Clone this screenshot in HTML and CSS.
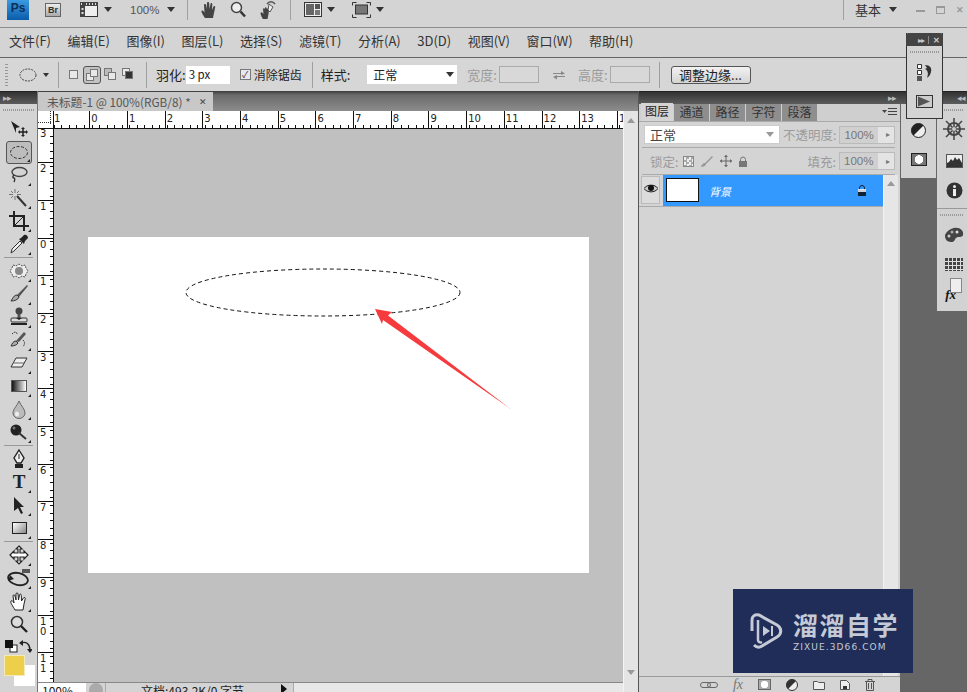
FILE: index.html
```html
<!DOCTYPE html>
<html lang="zh-CN">

<head>
    <meta charset="UTF-8">
    <title>Photoshop CS4</title>
    <link rel="stylesheet" href="styles.css">
</head>

<body>
    <div class="app">

        <!-- Application bar -->
        <header class="appbar">
            <div class="ps-logo">Ps</div>
            <div class="br-logo">Br</div>
            <svg class="icon film" width="18" height="15" viewBox="0 0 18 15"><rect x="0.5" y="0.5" width="17" height="14" fill="#eee" stroke="#333"/><rect x="0" y="0" width="18" height="4" fill="#444"/><rect x="0" y="0" width="5" height="15" fill="#444"/><path d="M1 1h1v2H1zM6 1h1v2H6zM9 1h1v2H9zM12 1h1v2h-1zM15 1h1v2h-1zM1.500 6h2v2h-2zM1.500 10h2v2h-2z" fill="#ddd"/></svg>
            <span class="caret film-caret"></span>
            <span class="zoom-value">100%</span>
            <span class="caret zoom-caret"></span>
            <span class="vsep sep-a"></span>
            <svg class="icon hand-top" width="18" height="18" viewBox="0 0 18 18"><path d="M5 17C3 14 1 11 1.500 10c1-1 2 0 3 1.500L4 4c0-1.500 2-1.500 2 0l.5 4L7 2c0-1.500 2-1.500 2.200 0L9.500 8l1-5c.3-1.500 2-1 1.800.5L12 9l1.500-3.500c.6-1.200 2-.5 1.700.8L14 12l-1 5z" fill="#444"/></svg>
            <svg class="icon zoom-top" width="16" height="17" viewBox="0 0 16 17"><circle cx="6.500" cy="6.500" r="5" fill="#eee" stroke="#444" stroke-width="1.500"/><path d="M10.500 10.500L15 15.500" stroke="#333" stroke-width="2.500"/></svg>
            <svg class="icon rotate-top" width="18" height="20" viewBox="0 0 18 20"><path d="M4 19C2 16 1 13 2 12.500c1-.5 1.500.5 2.500 1.500L4 9c0-1 1.500-1 1.500 0L6 8c0-1 1.500-1 1.600 0l.4 1 .6-.5c.8-.8 1.700 0 1.400 1L9.500 14l-1 5z" fill="#444"/><path d="M10 4l4 3-3 5-2-2z" fill="#eee" stroke="#555"/><path d="M8 4c2-3 6-3 8 0" fill="none" stroke="#555" stroke-width="1.500"/></svg>
            <span class="vsep sep-b"></span>
            <svg class="icon arrange" width="18" height="15" viewBox="0 0 18 15"><rect x="0.500" y="0.500" width="17" height="14" fill="#eee" stroke="#333"/><rect x="2" y="2" width="8" height="11" fill="#666"/><rect x="11" y="2" width="5" height="5" fill="#555"/><rect x="11" y="8" width="5" height="5" fill="#777"/></svg>
            <span class="caret arrange-caret"></span>
            <svg class="icon screen" width="19" height="16" viewBox="0 0 19 16"><rect x="3.500" y="3" width="12" height="9" fill="#777" stroke="#333"/><path d="M0.500 3.500V.5h4M14.500.5h4v3M18.500 12.500v3h-4M4.500 15.500h-4v-3" fill="none" stroke="#333"/></svg>
            <span class="caret screen-caret"></span>
            <span class="vsep sep-c"></span>
            <span class="workspace-name">基本</span>
            <span class="caret workspace-caret"></span>
            <div class="window-buttons">
                <span class="win-min"></span>
                <span class="win-max"></span>
                <span class="win-close">✕</span>
            </div>
        </header>

        <!-- Menus -->
        <nav class="menubar">
            <span>文件(F)</span>
            <span>编辑(E)</span>
            <span>图像(I)</span>
            <span>图层(L)</span>
            <span>选择(S)</span>
            <span>滤镜(T)</span>
            <span>分析(A)</span>
            <span>3D(D)</span>
            <span>视图(V)</span>
            <span>窗口(W)</span>
            <span>帮助(H)</span>
        </nav>

        <!-- Tool options -->
        <div class="optbar">
            <span class="grip-v"></span>
            <svg class="opt-ellipse" width="18" height="14" viewBox="0 0 18 14"><ellipse cx="9" cy="7" rx="8" ry="6" fill="none" stroke="#444" stroke-dasharray="2 1"/></svg>
            <span class="caret opt-caret"></span>
            <span class="vsep opt-sep-a"></span>
            <div class="modes">
                <span class="mode"><i class="sq sq-one"></i></span>
                <span class="mode pressed"><i class="sq sq-two"></i><i class="sq sq-three"></i></span>
                <span class="mode"><i class="sq sq-four"></i><i class="sq sq-five"></i></span>
                <span class="mode"><i class="sq sq-six"></i><i class="sq sq-seven"></i></span>
            </div>
            <span class="vsep opt-sep-b"></span>
            <label class="feather-label">羽化:</label>
            <span class="feather-input">3 px</span>
            <span class="checkbox">✓</span>
            <span class="aa-label">消除锯齿</span>
            <span class="vsep opt-sep-c"></span>
            <label class="style-label">样式:</label>
            <span class="style-select">正常<span class="caret"></span></span>
            <label class="dim-label width-label">宽度:</label>
            <span class="dim-input"></span>
            <svg class="swap" width="12" height="10" viewBox="0 0 12 10"><path d="M0 3h8V1l4 2.500L8 5V4H0zM12 6H4V5L0 7l4 2.500V7h8z" fill="#888"/></svg>
            <label class="dim-label height-label">高度:</label>
            <span class="dim-input"></span>
            <span class="vsep opt-sep-d"></span>
            <span class="refine">调整边缘...</span>
        </div>

        <div class="workspace">

            <!-- Tools -->
            <aside class="toolbox">
                <div class="dark-head"><span class="arrows">▸▸</span></div>
                <div class="grip-h"></div>
                <div class="tool"><svg width="20" height="18" viewBox="0 0 20 18"><path d="M2 1l9 6-4 1 0 5z" fill="#222"/><path d="M14 8v8M10 12h8" stroke="#222" stroke-width="1.500"/><path d="M14 7l-2 2h4zM14 17l-2-2h4zM9 12l2-2v4zM19 12l-2-2v4z" fill="#222"/></svg></div>
                <div class="tool selected more"><svg width="20" height="15" viewBox="0 0 20 15"><ellipse cx="10" cy="7.500" rx="8.500" ry="6" fill="none" stroke="#333" stroke-dasharray="3 1.500"/></svg></div>
                <div class="tool more"><svg width="20" height="18" viewBox="0 0 20 18"><ellipse cx="10.500" cy="6" rx="7.500" ry="4.500" fill="none" stroke="#444" stroke-width="1.400"/><path d="M5 9c-2 2-1 3 0 3s1 2 0 4" fill="none" stroke="#333" stroke-width="1.400"/></svg></div>
                <div class="tool more"><svg width="20" height="18" viewBox="0 0 20 18"><path d="M8 7l9 10" stroke="#333" stroke-width="2"/><path d="M6 0v4M6 7v4M0 5.500h4M8 5.500h4M2 2l2 2M10 2L8 4M2 9l2-2" stroke="#777"/></svg></div>
                <div class="tool more"><svg width="20" height="20" viewBox="0 0 20 20"><path d="M5 0v15h15M0 5h15v15" fill="none" stroke="#222" stroke-width="2"/><path d="M5 15L15 5" stroke="#222"/></svg></div>
                <div class="tool more"><svg width="20" height="20" viewBox="0 0 20 20"><path d="M2 19l1-4 8-8 2 2-8 8z" fill="#eee" stroke="#333"/><path d="M10 5l5 5 1-3 3-3c0-2-2-4-4-3l-3 3z" fill="#222"/></svg></div>
                <div class="tool-sep"></div>
                <div class="tool more"><svg width="20" height="18" viewBox="0 0 20 18"><path d="M4 3l3 1 3-2 3 2 3-1 1 3 2 3-2 3-1 3-3-1-3 2-3-2-3 1-1-3-2-3 2-3z" fill="#eee" stroke="#555" stroke-dasharray="2 1"/><circle cx="10" cy="9" r="4" fill="#888"/></svg></div>
                <div class="tool more"><svg width="20" height="20" viewBox="0 0 20 20"><path d="M8 11L18 1l1 1L10 13z" fill="#555"/><path d="M8 11c-3 0-4 3-6 6 3 0 7-1 8-4z" fill="#aaa" stroke="#333"/></svg></div>
                <div class="tool more"><svg width="20" height="21" viewBox="0 0 20 21"><circle cx="10" cy="4" r="3.500" fill="#444"/><path d="M8.500 7h3v4h-3z" fill="#555"/><rect x="2" y="11" width="16" height="4" rx="1" fill="#ddd" stroke="#333"/><rect x="2" y="16" width="16" height="2" fill="#222"/><path d="M10 13l-3-2h6z" fill="#222"/></svg></div>
                <div class="tool more"><svg width="20" height="20" viewBox="0 0 20 20"><path d="M7 11L15 2l2 2-7 8z" fill="#555"/><path d="M7 11c-3 0-4 3-5 5 3 0 6-1 7-3z" fill="#aaa" stroke="#333"/><path d="M3 4c3-3 5-2 5 0M14 10c2 2 2 4 0 7" fill="none" stroke="#333" stroke-dasharray="1.500 1"/></svg></div>
                <div class="tool more"><svg width="20" height="17" viewBox="0 0 20 17"><path d="M7 3h11l-5 9H2z" fill="#eee" stroke="#333"/><path d="M4 8h11" stroke="#666"/></svg></div>
                <div class="tool more"><span class="gradient-swatch"></span></div>
                <div class="tool more"><svg width="16" height="19" viewBox="0 0 16 19"><path d="M8 1C6 6 2 9 2 13a6 5.500 0 0 0 12 0C14 9 10 6 8 1z" fill="#bbb" stroke="#666"/><ellipse cx="6" cy="14" rx="2" ry="2.500" fill="#eee"/></svg></div>
                <div class="tool more"><svg width="20" height="19" viewBox="0 0 20 19"><circle cx="7" cy="7" r="5.500" fill="#222"/><path d="M10 10l7 6" stroke="#333" stroke-width="2"/><circle cx="5" cy="5" r="1.500" fill="#777"/></svg></div>
                <div class="tool-sep"></div>
                <div class="tool more"><svg width="16" height="20" viewBox="0 0 16 20"><path d="M8 1l5 8-3 5H6L3 9z" fill="#eee" stroke="#222" stroke-width="1.400"/><rect x="4" y="15" width="8" height="4" fill="#222"/><path d="M8 5v5" stroke="#222"/></svg></div>
                <div class="tool more type-tool">T</div>
                <div class="tool more"><svg width="16" height="19" viewBox="0 0 16 19"><path d="M3 1l10 10-4 0 3 6-2 1-3-6-4 3z" fill="#222"/></svg></div>
                <div class="tool more"><span class="shape-swatch"></span></div>
                <div class="tool-sep"></div>
                <div class="tool more"><svg width="20" height="20" viewBox="0 0 20 20"><path d="M10 1l3 3h-2v4h4V6l4 4-4 4v-2h-4v4h2l-3 3-3-3h2v-4H5v2l-4-4 4-4v2h4V4H7z" fill="#fff" stroke="#222" stroke-width="1.200"/></svg></div>
                <div class="tool more"><svg width="24" height="20" viewBox="0 0 24 20"><ellipse cx="11" cy="11" rx="10" ry="6" fill="none" stroke="#222" stroke-width="1.800" transform="rotate(12 11 11)"/><path d="M3 7l-2 6 6-2z" fill="#222"/><rect x="15" y="1" width="8" height="4" fill="#555"/></svg></div>
                <div class="tool more"><svg width="20" height="20" viewBox="0 0 20 20"><path d="M6 19C4 15 1 12 2 10c1-1 2 0 3 2L4 5c0-1.500 2-1.500 2 0l1 4V3c0-1.500 2-1.500 2 0l.5 6 1-5c.3-1.500 2-1 1.800.5L12.500 10l2-3c.6-1.200 2-.5 1.700.8L15 13l-1 6z" fill="#fff" stroke="#222"/></svg></div>
                <div class="tool"><svg width="18" height="18" viewBox="0 0 18 18"><circle cx="7" cy="7" r="5.500" fill="#ddd" stroke="#333" stroke-width="1.500"/><path d="M11 11l6 6" stroke="#222" stroke-width="2.400"/></svg></div>
                <div class="swatch-tools">
                    <svg width="13" height="13" viewBox="0 0 13 13"><rect x="5" y="5" width="7" height="7" fill="#fff" stroke="#222"/><rect x="0" y="0" width="8" height="8" fill="#111"/></svg>
                    <svg width="13" height="13" viewBox="0 0 13 13"><path d="M2 3c5-2 9 1 9 7" fill="none" stroke="#222" stroke-width="1.400"/><path d="M0 3l4-3v6zM8 9h6l-3 4z" fill="#222"/></svg>
                </div>
                <div class="colors">
                    <span class="bg-color"></span>
                    <span class="fg-color"></span>
                </div>
            </aside>

            <!-- Document -->
            <section class="docarea">
                <div class="tabrow">
                    <div class="doctab">未标题-1 @ 100%(RGB/8) *<span class="tab-close">✕</span></div>
                </div>
                <div class="docbody">
                    <div class="docmain">
                        <div class="hruler-row">
                            <div class="ruler-origin"></div>
                            <div class="hruler">
                                <span class="first">1</span><span>0</span><span>1</span><span>2</span><span>3</span><span>4</span><span>5</span><span>6</span><span>7</span><span>8</span><span>9</span><span>10</span><span>11</span><span>12</span><span>13</span><span>1</span>
                            </div>
                        </div>
                        <div class="canvas-row">
                            <div class="vruler">
                                <span class="first">3</span><span>2</span><span>1</span><span>0</span><span>1</span><span>2</span><span>3</span><span>4</span><span>5</span><span>6</span><span>7</span><span>8</span><span>9</span><span>1<br>0</span><span>1<br>1</span>
                            </div>
                            <div class="canvas">
                                <div class="sheet">
                                    <svg class="sheet-marks" width="501" height="336" viewBox="0 0 501 336">
                                        <ellipse cx="235" cy="55.500" rx="137" ry="23.500" fill="none" stroke="#111" stroke-dasharray="4 3"/>
                                        <polygon points="287,72 304,75 300,78.500 424,173 295,83 294,87" fill="#f53b3e"/>
                                    </svg>
                                </div>
                            </div>
                        </div>
                        <div class="statusbar">
                            <span class="status-zoom">100%</span>
                            <span class="status-btn"></span>
                            <span class="status-text">文档:493.2K/0 字节</span>
                            <span class="status-arrow"></span>
                            <span class="status-track"></span>
                        </div>
                    </div>
                    <div class="vscroll">
                        <span class="scroll-up"></span>
                        <span class="scroll-down"></span>
                    </div>
                </div>
            </section>

            <!-- Layers panel -->
            <section class="layers">
                <div class="dark-head"><span class="arrows">▸▸</span></div>
                <div class="panel-tabs">
                    <span class="active">图层</span>
                    <span>通道</span>
                    <span>路径</span>
                    <span>字符</span>
                    <span>段落</span>
                    <svg class="panel-menu" width="15" height="9" viewBox="0 0 15 9"><path d="M0 2h5L2.500 5z" fill="#444"/><path d="M6 0h9v1H6zM6 3h9v1H6zM6 6h9v1H6z" fill="#444"/></svg>
                </div>
                <div class="layer-row blend-row">
                    <span class="blend-select">正常<span class="caret"></span></span>
                    <span class="dim-text">不透明度:</span>
                    <span class="percent">100%<i>▸</i></span>
                </div>
                <div class="layer-row lock-row">
                    <span class="dim-text">锁定:</span>
                    <span class="lock-trans"></span>
                    <svg class="lock-icon" width="14" height="13" viewBox="0 0 14 13"><path d="M1 12c1-3 2-4 4-4l7-7 1 1-7 7c0 2-3 3-5 3z" fill="#999"/></svg>
                    <svg class="lock-icon" width="12" height="12" viewBox="0 0 12 12"><path d="M6 0v12M0 6h12" stroke="#666"/><path d="M6 0L4 2h4zM6 12l-2-2h4zM0 6l2-2v4zM12 6l-2-2v4z" fill="#666"/></svg>
                    <svg class="lock-icon" width="10" height="11" viewBox="0 0 10 11"><path d="M2.500 5V3.500a2.500 2.500 0 0 1 5 0V5" fill="none" stroke="#777"/><rect x="1" y="5" width="8" height="6" fill="#777"/></svg>
                    <span class="dim-text fill-label">填充:</span>
                    <span class="percent">100%<i>▸</i></span>
                </div>
                <div class="layer-list">
                    <div class="layer-rows">
                        <div class="layer-item">
                            <span class="eye"><svg width="14" height="9" viewBox="0 0 14 9"><path d="M0 4.500C3 0 11 0 14 4.500 11 9 3 9 0 4.500z" fill="#ccc" stroke="#222"/><circle cx="7" cy="4" r="3" fill="#111"/></svg></span>
                            <div class="layer-active">
                                <span class="layer-thumb"></span>
                                <span class="layer-name">背景</span>
                                <svg class="layer-lock" width="10" height="11" viewBox="0 0 10 11"><path d="M2.500 5V3a2.500 2.500 0 0 1 5 0v2" fill="none" stroke="#123"/><rect x="1" y="5" width="8" height="6" fill="#123"/><rect x="1" y="4" width="8" height="3" fill="#fff" opacity=".8"/></svg>
                            </div>
                        </div>
                    </div>
                    <div class="layer-scroll"><span></span></div>
                </div>
                <div class="layer-footer">
                    <svg width="18" height="8" viewBox="0 0 18 8"><rect x="0.500" y="1.500" width="10" height="5" rx="2.500" fill="none" stroke="#666"/><rect x="7.500" y="1.500" width="10" height="5" rx="2.500" fill="none" stroke="#666"/></svg>
                    <span class="fx-btn">fx</span>
                    <span class="mask-btn"></span>
                    <svg width="12" height="12" viewBox="0 0 12 12"><circle cx="6" cy="6" r="5.500" fill="#eee" stroke="#333"/><path d="M2 10L10 2A5.500 5.500 0 0 0 2 10z" fill="#333"/></svg>
                    <svg width="12" height="10" viewBox="0 0 12 10"><path d="M.5 1.500h4l1 1h6v7H.5z" fill="#eee" stroke="#555"/></svg>
                    <svg width="10" height="10" viewBox="0 0 10 10"><path d="M.5.500h6l3 3v6H.5z" fill="#eee" stroke="#555"/><path d="M3 6h4v3H3z" fill="#333"/></svg>
                    <svg width="10" height="12" viewBox="0 0 10 12"><path d="M0 2.500h10M3 2V.5h4V2M1.500 3v8.500h7V3" fill="none" stroke="#555"/><path d="M3.500 4v6M6.500 4v6" stroke="#555"/></svg>
                </div>
            </section>

            <!-- Collapsed panels -->
            <aside class="dock">
                <div class="dark-head dock-head"><span class="arrows">◂◂</span></div>
                <div class="dock-cols">
                    <div class="dock-col small">
                        <svg class="adjust-icon" width="15" height="15" viewBox="0 0 15 15"><circle cx="7.500" cy="7.500" r="7" fill="#eee" stroke="#222"/><path d="M2.500 12.500l10-10a7 7 0 0 0-10 10z" fill="#222"/></svg>
                        <span class="mask-icon"></span>
                    </div>
                    <div class="dock-col wide">
                        <div class="dock-group">
                            <div class="grip-h"></div>
                            <svg width="22" height="22" viewBox="0 0 22 22"><circle cx="11" cy="11" r="6" fill="none" stroke="#444" stroke-width="2"/><path d="M11 0v22M0 11h22M3 3l16 16M19 3L3 19" stroke="#444" stroke-width="1.500"/><circle cx="11" cy="11" r="2" fill="#ccc"/></svg>
                            <svg width="17" height="14" viewBox="0 0 17 14"><rect x="0.500" y="0.500" width="16" height="13" fill="#eee" stroke="#555"/><path d="M1 13V9l2-1 2-3 2 2 2-4 2 3 2-2 3 5v4z" fill="#333"/></svg>
                            <svg width="17" height="17" viewBox="0 0 17 17"><circle cx="8.500" cy="8.500" r="8" fill="#333"/><circle cx="8.500" cy="4.500" r="1.500" fill="#eee"/><rect x="7" y="7" width="3" height="7" fill="#eee"/></svg>
                        </div>
                        <div class="dock-group second">
                            <div class="grip-h"></div>
                            <svg width="20" height="16" viewBox="0 0 20 16"><path d="M10 1c6-1 10 3 9 7-1 3-5 1-7 3s-1 4-5 4-6-3-6-6 4-7 9-8z" fill="#444"/><circle cx="13" cy="5" r="1.500" fill="#ddd"/><circle cx="8" cy="5" r="1.500" fill="#aaa"/><circle cx="5" cy="9" r="1.500" fill="#ccc"/></svg>
                            <span class="swatch-grid"></span>
                            <span class="fx-icon"><i>fx</i></span>
                        </div>
                    </div>
                </div>
            </aside>
        </div>

        <!-- Floating panel -->
        <div class="floater">
            <div class="floater-head"><span class="arrows">▸▸</span><i></i><span class="floater-x">✕</span></div>
            <div class="grip-h"></div>
            <svg class="history-icon" width="20" height="19" viewBox="0 0 20 19"><path d="M1.500 1.500h4v4h-4zM1.500 7.500h4v4h-4z" fill="#fff" stroke="#333"/><rect x="1" y="13" width="5" height="5" fill="#555"/><path d="M9 2c5 0 7 3 6 7s-3 5-4 6c1-3 2-7-2-9l2-1z" fill="#333"/></svg>
            <svg class="play-icon" width="17" height="13" viewBox="0 0 17 13"><rect x="0.500" y="0.500" width="16" height="12" fill="#ccc" stroke="#333"/><path d="M2 1.500l12 5-12 5z" fill="#555"/></svg>
        </div>

        <!-- Watermark -->
        <div class="watermark">
            <svg width="36" height="38" viewBox="0 0 36 38"><path d="M4 19V8c0-4 3-6 7-5l18 10c5 3 5 9 0 12L14 34c-3 2-6 1-8-1" fill="none" stroke="#c5cad6" stroke-width="3"/><path d="M10 8v20c0 2 2 3 4 2" fill="none" stroke="#c5cad6" stroke-width="2.500"/><path d="M15 14v10l7-5z" fill="#c5cad6"/><rect x="23" y="14" width="2" height="10" fill="#c5cad6"/></svg>
            <div class="wm-text">
                <div class="wm-title">溜溜自学</div>
                <div class="wm-url">ZIXUE.3D66.COM</div>
            </div>
        </div>
    </div>
</body>

</html>
```

FILE: styles.css
```css
:root {
    --panel: #d4d4d4;
    --line: #8c8c8c;
    --text: #222;
    --dim: #9b9b9b;
}

* {
    box-sizing: border-box;
    margin: 0;
    padding: 0;
}

html, body {
    height: 692px;
    overflow: hidden;
}

body {
    font-family: "Noto Sans CJK SC", "Liberation Sans", sans-serif;
    font-size: 12px;
    color: var(--text);
    background-color: var(--panel);
}

.app {
    position: relative;
    width: 967px;
    height: 692px;
    overflow: hidden;
}

.caret {
    display: inline-block;
    width: 0;
    height: 0;
    border-left: 4px solid transparent;
    border-right: 4px solid transparent;
    border-top: 5px solid #333;
}

.vsep {
    display: block;
    width: 1px;
    background-color: #a0a0a0;
}

/* Application bar */
.appbar {
    display: flex;
    align-items: center;
    height: 28px;
    padding: 0 0 8px 7px;
    border-bottom: 1px solid var(--line);
}

.ps-logo {
    width: 22px;
    height: 20px;
    background: linear-gradient(#3a9be0, #0a5cab);
    color: #0d2f55;
    font: bold 12px "Liberation Sans", sans-serif;
    line-height: 17px;
    text-align: center;
}

.br-logo {
    width: 16px;
    height: 14px;
    margin-left: 16px;
    background: linear-gradient(#eee, #aaa);
    border: 1px solid #666;
    color: #333;
    font: bold 9px "Liberation Sans", sans-serif;
    line-height: 12px;
    text-align: center;
}

.film { margin-left: 19px; }
.film-caret { margin-left: 6px; }

.zoom-value {
    margin-left: 18px;
    width: 30px;
    color: #555;
    font-family: "Liberation Sans", sans-serif;
    font-size: 11.500px;
}

.zoom-caret { margin-left: 7px; }
.sep-a { height: 20px; margin-left: 12px; }
.hand-top { margin-left: 12px; }
.zoom-top { margin-left: 12px; }
.rotate-top { margin-left: 13px; }
.sep-b { height: 20px; margin-left: 13px; }
.arrange { margin-left: 13px; }
.arrange-caret { margin-left: 5px; }
.screen { margin-left: 17px; }
.screen-caret { margin-left: 5px; }
.sep-c { height: 20px; margin-left: auto; }

.workspace-name {
    margin-left: 11px;
    font-size: 13px;
    color: #333;
}

.workspace-caret { margin-left: 8px; }

.window-buttons {
    display: flex;
    align-items: center;
    gap: 11px;
    margin-left: 19px;
    margin-right: 3px;
}

.win-min {
    width: 9px;
    height: 2px;
    margin-top: 2px;
    background-color: #999;
}

.win-max {
    width: 9px;
    height: 8px;
    border: 1px solid #999;
    border-top-width: 2px;
}

.win-close {
    color: #999;
    font-size: 9px;
    font-weight: bold;
}

/* Menus */
.menubar {
    display: flex;
    align-items: center;
    gap: 16.500px;
    height: 30px;
    padding-left: 9px;
    padding-bottom: 4px;
    font-size: 13px;
    color: #333;
    border-bottom: 1px solid #666;
}

/* Tool options */
.optbar {
    display: flex;
    align-items: center;
    height: 33px;
    padding-left: 5px;
    background-color: #d6d6d6;
}

.grip-v {
    width: 3px;
    height: 22px;
    background: repeating-linear-gradient(#999 0 1px, transparent 1px 3px);
}

.opt-ellipse { margin-left: 11px; }
.opt-caret {
    margin-left: 6px;
    border-left-width: 3px;
    border-right-width: 3px;
    border-top-width: 4px;
}

.opt-sep-a { height: 26px; margin-left: 9px; }
.opt-sep-b { height: 26px; margin-left: 9px; }
.opt-sep-c { height: 26px; margin-left: 10px; }
.opt-sep-d { height: 26px; margin-left: 9px; }

.modes {
    display: flex;
    align-items: center;
    margin-left: 6px;
}

.mode {
    position: relative;
    display: block;
    width: 18px;
    height: 18px;
}

.mode.pressed {
    background-color: #c2c2c2;
    border: 1px solid #555;
    border-radius: 3px;
}

/* the small squares inside the selection mode buttons overlap each other */
.sq {
    position: absolute;
    display: block;
    width: 8px;
    height: 8px;
    background-color: #e8e8e8;
    border: 1px solid #777;
}

.sq-one { left: 4px; top: 4px; width: 9px; height: 9px; }
.sq-two { left: 2px; top: 6px; }
.sq-three { left: 6px; top: 2px; }
.sq-four { left: 3px; top: 2px; background-color: #bbb; }
.sq-five { left: 7px; top: 6px; }
.sq-six { left: 3px; top: 2px; }
.sq-seven { left: 6px; top: 5px; background-color: #333; }

.feather-label { margin-left: 9px; font-size: 13px; }

.feather-input {
    width: 44px;
    height: 18px;
    padding-left: 3px;
    background-color: #fff;
    font-size: 11.500px;
    line-height: 17px;
}

.checkbox {
    width: 11px;
    height: 11px;
    margin-left: 10px;
    background-color: #e8e8ee;
    border: 1px solid #777;
    color: #334;
    font-size: 9px;
    line-height: 9px;
    text-align: center;
}

.aa-label { margin-left: 3px; }
.style-label { margin-left: 8px; font-size: 13px; }

.style-select {
    display: flex;
    align-items: center;
    justify-content: space-between;
    width: 90px;
    height: 19px;
    margin-left: 17px;
    padding: 0 3px 0 6px;
    background-color: #fff;
}

.dim-label {
    color: var(--dim);
    font-size: 13px;
}

.width-label { margin-left: 10px; }
.height-label { margin-left: 13px; }

.dim-input {
    width: 40px;
    height: 17px;
    margin-left: 2px;
    background-color: #d8d8d8;
    border: 1px solid #aaa;
}

.swap { margin-left: 14px; }

.refine {
    width: 80px;
    height: 18px;
    margin-left: 11px;
    background: linear-gradient(#f2f2f2, #d4d4d4);
    border: 1px solid #555;
    border-radius: 3px;
    font-size: 13px;
    line-height: 15px;
    text-align: center;
}

/* Main area */
.workspace {
    display: flex;
    height: 601px;
}

.dark-head {
    height: 13px;
    background: linear-gradient(#333, #5c5c5c);
    border-top: 1px solid #222;
    color: #bbb;
    font-size: 9px;
    line-height: 11px;
}

.arrows {
    display: block;
    letter-spacing: -1px;
}

.grip-h {
    height: 2px;
    margin: 5px 3px 0;
    background: repeating-linear-gradient(90deg, #999 0 1px, transparent 1px 2px);
}

/* Tools */
.toolbox {
    width: 38px;
    flex-shrink: 0;
    border-right: 1px solid #777;
}

.toolbox .dark-head { padding-left: 3px; }
.toolbox .grip-h { margin-bottom: 6.500px; }

.tool {
    position: relative;
    display: flex;
    align-items: center;
    justify-content: center;
    width: 26px;
    height: 23px;
    margin-left: 6px;
}

.tool.selected {
    background-color: #bdbdbd;
    border: 1px solid #555;
    border-radius: 3px;
}

.tool.more::after {
    content: "";
    position: absolute;
    right: 1px;
    bottom: 1px;
    border-left: 3px solid transparent;
    border-bottom: 3px solid #222;
}

.tool-sep {
    height: 1px;
    margin: 1.500px 4px;
    background-color: #999;
}

.gradient-swatch {
    width: 16px;
    height: 12px;
    background: linear-gradient(90deg, #111, #fff);
    border: 1px solid #555;
}

.shape-swatch {
    width: 15px;
    height: 12px;
    background: linear-gradient(135deg, #fff, #888);
    border: 1px solid #222;
}

.type-tool {
    font: bold 19px "Liberation Serif", serif;
    color: #222;
}

.swatch-tools {
    display: flex;
    justify-content: space-between;
    margin-top: 4px;
    padding: 0 5px 0 5px;
}

.colors {
    position: relative;
    height: 32px;
    margin-top: 2px;
}

.fg-color {
    position: absolute;
    left: 4px;
    top: 0;
    width: 21px;
    height: 21px;
    background-color: #eecf4c;
    border: 1px solid #f4eab8;
}

.bg-color {
    position: absolute;
    left: 14px;
    top: 10px;
    width: 21px;
    height: 21px;
    background-color: #fff;
}

/* Document */
.docarea {
    display: flex;
    flex-direction: column;
    width: 600px;
    flex-shrink: 0;
}

.tabrow {
    height: 20px;
    padding-top: 1px;
    background: linear-gradient(#3c3c3c 0, #6a6a6a 4px, #8c8c8c);
}

.doctab {
    display: flex;
    align-items: center;
    justify-content: space-between;
    width: 175px;
    height: 19px;
    padding: 0 6px 0 9px;
    background-color: #c8c8c8;
    color: #555;
    font-size: 11.800px;
}

.tab-close {
    color: #444;
    font-size: 9px;
}

.docbody {
    display: flex;
    flex: 1;
    min-height: 0;
}

.docmain {
    display: flex;
    flex-direction: column;
    flex: 1;
    min-width: 0;
}

.hruler-row {
    display: flex;
    height: 18px;
    flex-shrink: 0;
    background-color: #fff;
    border-bottom: 1px solid #111;
}

.ruler-origin {
    width: 16px;
    flex-shrink: 0;
    border-right: 1px solid #111;
    background:
        repeating-linear-gradient(90deg, #333 0 1px, transparent 1px 2px) 0 11px / 13px 1px no-repeat,
        repeating-linear-gradient(#333 0 1px, transparent 1px 2px) 12px 0 / 1px 14px no-repeat;
}

.hruler {
    display: flex;
    flex: 1;
    overflow: hidden;
    background: repeating-linear-gradient(90deg, #111 0 1px, transparent 1px 7.540px) -0.200px 100% / 100% 3px no-repeat;
    font: 10px "DejaVu Sans", sans-serif;
    line-height: 15px;
}

.hruler span {
    flex: 0 0 37.700px;
    padding-left: 1px;
    border-left: 1px solid #111;
}

.hruler .first {
    flex-basis: 35.300px;
    padding-left: 0;
    border-left: 0;
}

.canvas-row {
    display: flex;
    flex: 1;
    min-height: 0;
}

.vruler {
    display: flex;
    flex-direction: column;
    width: 16px;
    flex-shrink: 0;
    overflow: hidden;
    background: #fff repeating-linear-gradient(#111 0 1px, transparent 1px 7.540px) 100% -1px / 3px 100% no-repeat;
    border-right: 1px solid #111;
    font: 10px "DejaVu Sans", sans-serif;
    line-height: 10px;
}

.vruler span {
    flex: 0 0 37.700px;
    padding-left: 2px;
    padding-top: 1px;
    border-top: 1px solid #111;
}

.vruler .first {
    flex-basis: 33.300px;
    padding-top: 0;
    border-top: 0;
}

.canvas {
    display: flex;
    flex: 1;
    align-items: center;
    justify-content: center;
    background-color: #c0c0c0;
}

.sheet {
    position: relative;
    width: 501px;
    height: 336px;
    margin-bottom: 1px;
    background-color: #fff;
}

.sheet-marks {
    position: absolute;
    left: 0;
    top: 0;
}

/* only the top of the status bar is inside the window */
.statusbar {
    display: flex;
    align-items: flex-start;
    height: 10px;
    flex-shrink: 0;
    overflow: hidden;
    background-color: var(--panel);
    border-top: 1px solid #888;
}

.status-zoom {
    width: 48px;
    height: 16px;
    padding-left: 4px;
    background-color: #fff;
    font-size: 12px;
    line-height: 15px;
}

.status-btn {
    width: 14px;
    height: 14px;
    margin-left: 3px;
    background-color: #aaa;
    border-radius: 50%;
}

.status-text {
    flex: 1;
    margin-left: 2px;
    padding-left: 35px;
    border-left: 1px solid #aaa;
    font-size: 12px;
    line-height: 15px;
    color: #222;
}

.status-arrow {
    width: 0;
    height: 0;
    margin: 1px 6px 0;
    border-top: 5px solid transparent;
    border-bottom: 5px solid transparent;
    border-left: 6px solid #111;
}

.status-track {
    width: 330px;
    height: 16px;
    background-color: #e8e8e8;
    border-left: 1px solid #aaa;
}

.vscroll {
    display: flex;
    flex-direction: column;
    justify-content: space-between;
    align-items: center;
    width: 15px;
    flex-shrink: 0;
    padding: 7px 0;
    background-color: #e4e4e4;
    border-left: 1px solid #f4f4f4;
}

.scroll-up, .scroll-down {
    border-left: 4px solid transparent;
    border-right: 4px solid transparent;
}

.scroll-up { border-bottom: 5px solid #999; }
.scroll-down { border-top: 5px solid #999; margin-bottom: 10px; }

/* Layers panel */
.layers {
    display: flex;
    flex-direction: column;
    width: 262px;
    flex-shrink: 0;
    border-left: 1px solid #555;
    background-color: var(--panel);
}

.layers .dark-head {
    padding-right: 4px;
    text-align: right;
}

.panel-tabs {
    display: flex;
    align-items: flex-end;
    height: 18px;
    padding-left: 2px;
    gap: 1px;
    background-color: #cfcfcf;
    border-bottom: 1px solid #aaa;
}

.panel-tabs span {
    width: 35px;
    height: 17px;
    background-color: #8e8e8e;
    color: #333;
    font-size: 12px;
    line-height: 16px;
    text-align: center;
}

.panel-tabs .active {
    width: 32px;
    height: 18px;
    background-color: var(--panel);
    color: #222;
}

.panel-menu {
    margin: 0 3px 4px auto;
}

.layer-row {
    display: flex;
    align-items: center;
    margin: 0 5px 0 3px;
    border-bottom: 1px solid #aaa;
}

.blend-row {
    gap: 3px;
    height: 26px;
    padding-left: 2px;
}

.lock-row {
    height: 27px;
    padding-left: 8px;
}

.blend-select {
    display: flex;
    align-items: center;
    justify-content: space-between;
    width: 137px;
    height: 19px;
    padding: 0 5px;
    background-color: #fff;
    border: 1px solid #ccc;
    color: #444;
    font-size: 13px;
}

.blend-select .caret {
    border-top-color: #999;
}

.dim-text {
    color: var(--dim);
    font-size: 12.500px;
    white-space: nowrap;
}

.percent {
    display: flex;
    align-items: center;
    justify-content: space-between;
    width: 56px;
    height: 18px;
    padding: 0 4px;
    background: linear-gradient(90deg, #d0d0d0 0 38px, #e4e4e4 38px);
    border: 1px solid #bbb;
    color: #777;
    font: 11.500px "Liberation Sans", sans-serif;
}

.percent i {
    font-size: 8px;
    font-style: normal;
}

.lock-trans {
    width: 11px;
    height: 11px;
    margin-left: 5px;
    background: repeating-conic-gradient(#aaa 0 25%, #eee 0 50%) 0 0 / 5px 5px;
    border: 1px solid #888;
}

.lock-icon { margin-left: 6px; }
.fill-label { margin-left: auto; margin-right: 3px; }

.layer-list {
    display: flex;
    flex: 1;
    min-height: 0;
}

.layer-rows {
    flex: 1;
}

.layer-item {
    display: flex;
    height: 32px;
    border-bottom: 1px solid #aaa;
}

.eye {
    display: flex;
    align-items: center;
    justify-content: center;
    width: 19px;
    height: 28px;
    margin: 1px 3px 0 2px;
    padding-bottom: 4px;
    background-color: #dcdcdc;
    border: 1px solid #bbb;
}

.layer-active {
    display: flex;
    align-items: center;
    flex: 1;
    background-color: #3399ff;
}

.layer-thumb {
    width: 33px;
    height: 24px;
    margin-left: 3px;
    margin-bottom: 2px;
    background-color: #fff;
    border: 1px solid #111;
}

.layer-name {
    margin-left: 10px;
    color: #fff;
    font-size: 11px;
    font-style: italic;
}

.layer-lock {
    margin-left: auto;
    margin-right: 16px;
}

.layer-scroll {
    width: 15px;
    flex-shrink: 0;
    margin-right: 2px;
    background-color: #e6e6e6;
    border-left: 1px solid #f2f2f2;
}

.layer-scroll span {
    display: block;
    width: 0;
    height: 0;
    margin: 6px auto 0;
    border-left: 4px solid transparent;
    border-right: 4px solid transparent;
    border-bottom: 5px solid #999;
}

.layer-footer {
    display: flex;
    align-items: center;
    justify-content: flex-end;
    gap: 15px;
    height: 16px;
    flex-shrink: 0;
    padding-right: 25px;
    border-top: 1px solid #999;
}

.fx-btn {
    color: #777;
    font: italic 14px "Liberation Serif", serif;
}

.mask-btn {
    width: 13px;
    height: 11px;
    background: radial-gradient(circle, #fff 3.500px, #aaa 4px);
    border: 1px solid #666;
}

/* Collapsed panels */
.dock {
    display: flex;
    flex-direction: column;
    flex: 1;
    min-width: 0;
    background-color: #666;
}

.dock-head {
    padding-right: 2px;
    text-align: right;
}

.dock-cols {
    display: flex;
    flex: 1;
    align-items: flex-start;
}

.dock-col.small {
    display: flex;
    flex-direction: column;
    align-items: center;
    width: 36px;
    height: 74px;
    margin-left: 1px;
    padding-top: 19px;
    gap: 15px;
    background-color: #d2d2d2;
}

.mask-icon {
    width: 16px;
    height: 13px;
    background: radial-gradient(circle, #fff 4px, #777 4.500px);
    border: 1px solid #222;
}

.dock-col.wide {
    width: 30px;
    height: 207px;
    margin-left: 1px;
    background-color: #d2d2d2;
}

.dock-group {
    display: flex;
    flex-direction: column;
    align-items: center;
    gap: 9px;
    height: 105px;
    padding-left: 4px;
    border-bottom: 1px solid #999;
}

.dock-group .grip-h {
    align-self: stretch;
    margin-left: -1px;
    margin-bottom: -2px;
}

.dock-group svg:nth-of-type(2) { margin-top: 5px; }
.dock-group svg:nth-of-type(3) { margin-top: 5px; }

.dock-group.second {
    height: 102px;
    border-bottom: 0;
    gap: 15px;
}

.dock-group.second .grip-h { margin-bottom: -4px; }

.swatch-grid {
    width: 18px;
    height: 13px;
    background:
        repeating-linear-gradient(90deg, transparent 0 3px, #ddd 3px 4px),
        repeating-linear-gradient(transparent 0 3px, #ddd 3px 4px),
        #444;
}

.fx-icon {
    display: block;
    width: 12px;
    height: 15px;
    margin: -8px 0 0 4px;
    background-color: #eee;
    border: 1px solid #888;
}

.fx-icon i {
    display: block;
    margin: 8px 0 0 -6px;
    color: #111;
    font: italic bold 13px "Liberation Serif", serif;
}

/* Floating panel */
.floater {
    position: absolute;
    left: 906px;
    top: 33px;
    display: flex;
    flex-direction: column;
    align-items: center;
    width: 37px;
    height: 86px;
    background-color: #d4d4d4;
    border: 1px solid #333;
    border-top: 0;
}

.floater .grip-h {
    align-self: stretch;
    margin-bottom: 10px;
}

.floater-head {
    display: flex;
    align-items: center;
    justify-content: flex-end;
    gap: 4px;
    align-self: stretch;
    height: 13px;
    margin: 0 -1px;
    padding-right: 3px;
    background-color: #444;
    border-radius: 3px 3px 0 0;
    color: #ccc;
    font-size: 8px;
}

.floater-head i {
    width: 1px;
    height: 8px;
    background-color: #888;
}

.floater-x {
    font-size: 8px;
    font-weight: bold;
}

.history-icon { margin-left: 3px; }
.play-icon { margin-top: 13px; }

/* Watermark */
.watermark {
    position: absolute;
    left: 733px;
    top: 589px;
    display: flex;
    align-items: center;
    width: 180px;
    height: 84px;
    padding: 0 0 0 15px;
    background-color: #1f2d58;
}

.wm-text {
    margin-left: 9px;
    color: #c5cad6;
}

.wm-title {
    height: 29px;
    overflow: hidden;
    font-size: 25px;
    font-weight: 700;
    letter-spacing: 1.500px;
    line-height: 27px;
    white-space: nowrap;
}

.wm-url {
    margin-top: 2px;
    font: 9px "DejaVu Sans", sans-serif;
    letter-spacing: 1.100px;
    white-space: nowrap;
}
```
